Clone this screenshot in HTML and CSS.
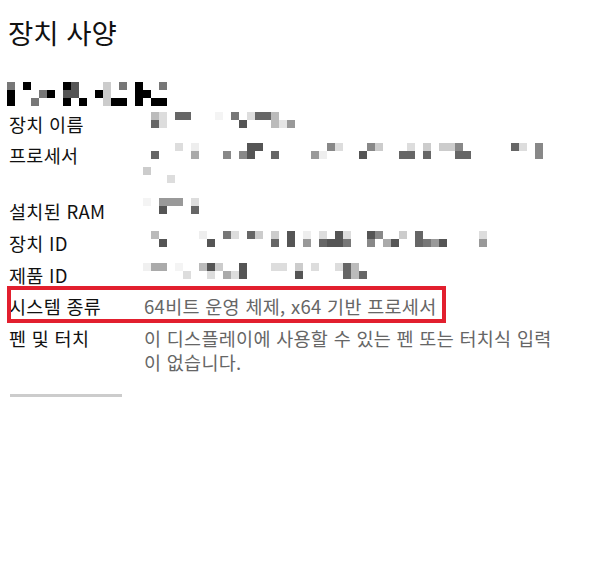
FILE: index.html
```html
<!DOCTYPE html>
<html lang="ko">
<head>
<meta charset="utf-8">
<title>장치 사양</title>
<link rel="stylesheet" href="styles.css">
</head>
<body>
<main class="page">
  <h1 class="title">장치 사양</h1>
  <svg class="mask mask-heading" width="168" height="24" viewBox="0 0 168 24" shape-rendering="crispEdges" aria-hidden="true">
    <rect x="0" y="0" width="8" height="8" fill="#777"/><rect x="0" y="8" width="8" height="16" fill="#000"/>
    <rect x="16" y="0" width="8" height="8" fill="#000"/>
    <rect x="24" y="16" width="8" height="8" fill="#777"/>
    <rect x="32" y="8" width="8" height="8" fill="#777"/>
    <rect x="40" y="8" width="8" height="8" fill="#000"/>
    <rect x="56" y="0" width="8" height="8" fill="#000"/><rect x="56" y="8" width="8" height="8" fill="#555"/><rect x="56" y="16" width="8" height="8" fill="#000"/>
    <rect x="64" y="0" width="8" height="16" fill="#555"/>
    <rect x="72" y="16" width="8" height="8" fill="#000"/>
    <rect x="88" y="8" width="8" height="8" fill="#000"/>
    <rect x="96" y="0" width="8" height="24" fill="#ccc"/>
    <rect x="104" y="16" width="16" height="8" fill="#000"/>
    <rect x="112" y="0" width="8" height="8" fill="#777"/>
    <rect x="128" y="0" width="8" height="24" fill="#000"/>
    <rect x="136" y="8" width="8" height="8" fill="#000"/>
    <rect x="144" y="16" width="16" height="8" fill="#000"/>
    <rect x="152" y="0" width="8" height="8" fill="#777"/>
  </svg>
  <dl class="specs">
    <div class="row">
      <dt class="label">장치 이름</dt>
      <dd class="value">
        <svg class="mask" width="400" height="24" viewBox="0 0 400 24" shape-rendering="crispEdges" aria-hidden="true">
          <rect x="8" y="0" width="8" height="8" fill="#bbb"/><rect x="8" y="8" width="8" height="8" fill="#666"/>
          <rect x="16" y="0" width="8" height="16" fill="#ddd"/>
          <rect x="32" y="0" width="16" height="8" fill="#666"/>
          <rect x="72" y="0" width="8" height="8" fill="#f4f4f4"/>
          <rect x="88" y="0" width="8" height="8" fill="#777"/>
          <rect x="96" y="8" width="8" height="8" fill="#555"/>
          <rect x="104" y="0" width="8" height="8" fill="#ddd"/>
          <rect x="112" y="0" width="16" height="8" fill="#666"/>
          <rect x="128" y="0" width="8" height="16" fill="#bbb"/>
          <rect x="136" y="8" width="8" height="8" fill="#e5e5e5"/>
          <rect x="144" y="8" width="8" height="8" fill="#999"/>
        </svg>
      </dd>
    </div>
    <div class="row">
      <dt class="label">프로세서</dt>
      <dd class="value">
        <svg class="mask" width="420" height="48" viewBox="0 0 420 48" shape-rendering="crispEdges" aria-hidden="true">
          <rect x="8" y="8" width="8" height="8" fill="#666"/>
          <rect x="32" y="0" width="8" height="8" fill="#ddd"/>
          <rect x="48" y="0" width="8" height="8" fill="#eee"/><rect x="48" y="8" width="8" height="8" fill="#aaa"/>
          <rect x="80" y="8" width="8" height="8" fill="#888"/>
          <rect x="96" y="8" width="8" height="8" fill="#888"/>
          <rect x="104" y="0" width="8" height="16" fill="#555"/>
          <rect x="112" y="0" width="8" height="8" fill="#555"/>
          <rect x="128" y="8" width="8" height="8" fill="#666"/>
          <rect x="168" y="8" width="8" height="8" fill="#999"/>
          <rect x="176" y="8" width="8" height="8" fill="#eee"/>
          <rect x="184" y="0" width="8" height="8" fill="#888"/>
          <rect x="192" y="0" width="8" height="8" fill="#ddd"/>
          <rect x="216" y="8" width="8" height="8" fill="#555"/>
          <rect x="224" y="0" width="8" height="8" fill="#888"/>
          <rect x="232" y="0" width="8" height="8" fill="#ccc"/>
          <rect x="256" y="8" width="16" height="8" fill="#666"/>
          <rect x="264" y="0" width="8" height="8" fill="#ddd"/>
          <rect x="280" y="0" width="8" height="8" fill="#ccc"/><rect x="280" y="8" width="8" height="8" fill="#666"/>
          <rect x="296" y="0" width="16" height="8" fill="#ccc"/>
          <rect x="312" y="0" width="8" height="8" fill="#888"/><rect x="312" y="8" width="16" height="8" fill="#666"/>
          <rect x="368" y="0" width="8" height="8" fill="#666"/>
          <rect x="376" y="0" width="8" height="8" fill="#ddd"/>
          <rect x="392" y="0" width="8" height="16" fill="#888"/>
          <rect x="0" y="24" width="8" height="8" fill="#ccc"/>
          <rect x="24" y="32" width="8" height="8" fill="#ddd"/>
        </svg>
      </dd>
    </div>
    <div class="row">
      <dt class="label">설치된 RAM</dt>
      <dd class="value">
        <svg class="mask mask-up" width="400" height="24" viewBox="0 0 400 24" shape-rendering="crispEdges" aria-hidden="true">
          <rect x="0" y="0" width="8" height="8" fill="#f4f4f4"/>
          <rect x="16" y="0" width="24" height="8" fill="#999"/>
          <rect x="16" y="8" width="8" height="8" fill="#555"/>
          <rect x="48" y="0" width="8" height="8" fill="#ddd"/><rect x="48" y="8" width="8" height="8" fill="#666"/>
        </svg>
      </dd>
    </div>
    <div class="row">
      <dt class="label">장치 ID</dt>
      <dd class="value">
        <svg class="mask" width="400" height="24" viewBox="0 0 400 24" shape-rendering="crispEdges" aria-hidden="true">
          <rect x="8" y="0" width="8" height="8" fill="#bbb"/>
          <rect x="16" y="8" width="8" height="8" fill="#555"/>
          <rect x="56" y="0" width="8" height="8" fill="#eee"/>
          <rect x="64" y="8" width="8" height="8" fill="#555"/>
          <rect x="80" y="0" width="8" height="8" fill="#777"/>
          <rect x="88" y="0" width="8" height="8" fill="#ddd"/>
          <rect x="104" y="0" width="8" height="8" fill="#666"/>
          <rect x="112" y="0" width="8" height="8" fill="#ccc"/>
          <rect x="128" y="0" width="8" height="8" fill="#ccc"/><rect x="128" y="8" width="8" height="8" fill="#666"/>
          <rect x="144" y="0" width="8" height="16" fill="#555"/>
          <rect x="160" y="0" width="8" height="8" fill="#eee"/><rect x="160" y="8" width="8" height="8" fill="#999"/>
          <rect x="176" y="0" width="8" height="8" fill="#ddd"/><rect x="176" y="8" width="8" height="8" fill="#666"/>
          <rect x="184" y="8" width="16" height="8" fill="#555"/>
          <rect x="192" y="0" width="8" height="8" fill="#555"/>
          <rect x="200" y="0" width="8" height="8" fill="#ddd"/><rect x="200" y="8" width="8" height="8" fill="#777"/>
          <rect x="224" y="0" width="8" height="8" fill="#555"/><rect x="224" y="8" width="8" height="8" fill="#888"/>
          <rect x="232" y="0" width="8" height="8" fill="#888"/>
          <rect x="240" y="8" width="8" height="8" fill="#aaa"/>
          <rect x="248" y="8" width="8" height="8" fill="#555"/>
          <rect x="256" y="0" width="8" height="8" fill="#ccc"/>
          <rect x="272" y="0" width="8" height="16" fill="#666"/>
          <rect x="280" y="8" width="8" height="8" fill="#777"/>
          <rect x="288" y="8" width="8" height="8" fill="#999"/>
          <rect x="296" y="8" width="8" height="8" fill="#555"/>
          <rect x="336" y="0" width="8" height="8" fill="#ddd"/><rect x="336" y="8" width="8" height="8" fill="#999"/>
        </svg>
      </dd>
    </div>
    <div class="row">
      <dt class="label">제품 ID</dt>
      <dd class="value">
        <svg class="mask" width="400" height="24" viewBox="0 0 400 24" shape-rendering="crispEdges" aria-hidden="true">
          <rect x="0" y="0" width="8" height="8" fill="#f0f0f0"/>
          <rect x="8" y="0" width="16" height="8" fill="#aaa"/>
          <rect x="32" y="0" width="8" height="8" fill="#f4f4f4"/>
          <rect x="40" y="8" width="8" height="8" fill="#ddd"/>
          <rect x="56" y="0" width="8" height="8" fill="#bbb"/>
          <rect x="64" y="0" width="8" height="8" fill="#555"/><rect x="64" y="8" width="8" height="8" fill="#ddd"/>
          <rect x="72" y="0" width="8" height="8" fill="#ccc"/>
          <rect x="80" y="8" width="8" height="8" fill="#aaa"/>
          <rect x="88" y="8" width="8" height="8" fill="#ddd"/>
          <rect x="96" y="0" width="8" height="16" fill="#555"/>
          <rect x="128" y="0" width="16" height="8" fill="#ddd"/>
          <rect x="152" y="0" width="8" height="8" fill="#ccc"/><rect x="152" y="8" width="8" height="8" fill="#555"/>
          <rect x="168" y="0" width="8" height="8" fill="#ddd"/>
          <rect x="192" y="0" width="8" height="8" fill="#ddd"/>
          <rect x="200" y="0" width="8" height="16" fill="#666"/>
          <rect x="208" y="0" width="8" height="16" fill="#bbb"/>
          <rect x="216" y="8" width="8" height="8" fill="#666"/>
        </svg>
      </dd>
    </div>
    <div class="row highlight">
      <dt class="label">시스템 종류</dt>
      <dd class="value">64비트 운영 체제, x64 기반 프로세서</dd>
    </div>
    <div class="row">
      <dt class="label">펜 및 터치</dt>
      <dd class="value">이 디스플레이에 사용할 수 있는 펜 또는 터치식 입력<br>이 없습니다.</dd>
    </div>
  </dl>
  <div class="bar"></div>
</main>
</body>
</html>
```

FILE: styles.css
```css
html, body {
  margin: 0;
  background: #ffffff;
}

body {
  font-family: "Noto Sans CJK KR", "Noto Sans", sans-serif;
  color: #000000;
}

.page {
  padding: 14px 0 0 8px;
}

.title {
  margin: 0;
  font-size: 27.5px;
  font-weight: 400;
  line-height: 36px;
  color: #111111;
}

.mask {
  display: block;
}

.mask-heading {
  margin: 32px 0 0 -1px;
}

.specs {
  display: flex;
  flex-direction: column;
  gap: 7.75px;
  margin: 5.5px 0 0;
}

.row {
  position: relative;
  display: grid;
  grid-template-columns: 136px 1fr;
  font-size: 18.5px;
  letter-spacing: 0.3px;
  line-height: 24px;
}

.label {
  margin: 0 0 0 1px;
  color: #111111;
}

.value {
  margin: 0;
  color: #666666;
}

.value .mask {
  margin-left: -1px;
}

.value .mask-up {
  margin-top: -1px;
  margin-bottom: 1px;
}

.highlight::after {
  content: "";
  position: absolute;
  left: -1px;
  top: -8px;
  width: 439px;
  height: 37px;
  border: 4px solid #e21f2e;
  box-sizing: border-box;
  pointer-events: none;
}

.bar {
  width: 112px;
  height: 3px;
  margin: 20px 0 0 2px;
  background: #cccccc;
}
```
